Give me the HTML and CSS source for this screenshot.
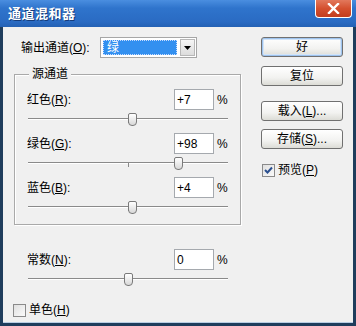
FILE: index.html
```html
<!DOCTYPE html>
<html lang="zh-CN">

    <head>
        <meta charset="UTF-8">
        <title>通道混和器</title>
        <link rel="stylesheet" href="styles.css">
    </head>

    <body>

        <div class="window">
            <div class="titlebar">
                <span class="title">通道混和器</span>
                <span class="close">
                    <svg width="13" height="11" viewBox="0 0 13 11">
                        <path d="M2 1 L11 10 M11 1 L2 10" stroke="#fff" stroke-width="2.4" stroke-linecap="square" />
                    </svg>
                </span>
            </div>

            <div class="client">
                <div class="main">
                    <div class="output-row">
                        <span class="output-label">输出通道(<u>O</u>):</span>
                        <div class="select">
                            <span class="select-value"><span class="focus">绿</span></span>
                            <span class="select-arrow">
                                <svg width="7" height="4" viewBox="0 0 7 4"><path d="M0 0 H7 L3.5 4 Z" fill="#000" /></svg>
                            </span>
                        </div>
                    </div>

                    <div class="group">
                        <span class="legend">源通道</span>

                        <div class="param">
                            <div class="param-head">
                                <span class="param-label">红色(<u>R</u>):</span>
                                <span class="field">+7</span>
                                <span class="unit">%</span>
                            </div>
                            <div class="slider">
                                <div class="track"></div>
                                <span class="tick"></span>
                                <span class="thumb" style="left: 101px"></span>
                            </div>
                        </div>

                        <div class="param">
                            <div class="param-head">
                                <span class="param-label">绿色(<u>G</u>):</span>
                                <span class="field">+98</span>
                                <span class="unit">%</span>
                            </div>
                            <div class="slider">
                                <div class="track"></div>
                                <span class="tick"></span>
                                <span class="thumb" style="left: 147px"></span>
                            </div>
                        </div>

                        <div class="param">
                            <div class="param-head">
                                <span class="param-label">蓝色(<u>B</u>):</span>
                                <span class="field">+4</span>
                                <span class="unit">%</span>
                            </div>
                            <div class="slider">
                                <div class="track"></div>
                                <span class="tick"></span>
                                <span class="thumb" style="left: 101px"></span>
                            </div>
                        </div>
                    </div>

                    <div class="param constant">
                        <div class="param-head">
                            <span class="param-label">常数(<u>N</u>):</span>
                            <span class="field">0</span>
                            <span class="unit">%</span>
                        </div>
                        <div class="slider">
                            <div class="track"></div>
                            <span class="tick"></span>
                            <span class="thumb" style="left: 97px"></span>
                        </div>
                    </div>

                    <label class="check mono">
                        <span class="box"></span>
                        <span>单色(<u>H</u>)</span>
                    </label>
                </div>

                <div class="side">
                    <button class="btn default">好</button>
                    <button class="btn reset">复位</button>
                    <button class="btn load">载入(<u>L</u>)...</button>
                    <button class="btn save">存储(<u>S</u>)...</button>
                    <label class="check preview">
                        <span class="box">
                            <svg width="9" height="9" viewBox="0 0 9 9"><path d="M1 4 L3.5 6.5 L8 1.5" fill="none" stroke="#2a4f8f" stroke-width="2" /></svg>
                        </span>
                        <span>预览(<u>P</u>)</span>
                    </label>
                </div>
            </div>
        </div>

    </body>

</html>
```

FILE: styles.css
```css
body {
    margin: 0;
    font-family: "Liberation Sans", "Noto Sans CJK SC", sans-serif;
    font-size: 12px;
    color: #000;
}

u {
    text-decoration: underline;
    text-underline-offset: 1px;
}

.window {
    width: 356px;
    height: 326px;
    box-sizing: border-box;
    display: flex;
    flex-direction: column;
    background: #1f3d5c;
    padding: 0 3px 3px 3px;
}

.titlebar {
    height: 27px;
    flex: none;
    display: flex;
    align-items: flex-start;
    justify-content: space-between;
    margin: 0 -3px;
    padding: 0 1px 0 8px;
    background: linear-gradient(180deg, #4a8ee0 0%, #2f74cc 30%, #2a6bc3 80%, #2461b4 100%);
}

.title {
    margin-top: 6px;
    color: #fff;
    font-weight: bold;
    font-size: 13px;
    line-height: 16px;
    text-shadow: 1px 1px 0 #153c7a;
    letter-spacing: 0.5px;
}

.close {
    width: 35px;
    height: 17px;
    display: flex;
    align-items: center;
    justify-content: center;
    margin-right: 3px;
    border: 1px solid #fff;
    border-top: none;
    border-radius: 0 0 4px 4px;
    background: linear-gradient(180deg, #e2785c 0%, #d4502f 50%, #c23d1e 100%);
}

.client {
    flex: 1;
    display: flex;
    background: #f0f0f0;
    border-bottom: 1px solid #b9cde3;
}

.main {
    width: 227px;
    padding: 10px 0 0 11px;
}

.output-row {
    height: 21px;
    display: flex;
    align-items: center;
}

.output-label {
    width: 79px;
    padding-left: 7px;
    line-height: 14px;
}

.select {
    width: 97px;
    height: 21px;
    box-sizing: border-box;
    display: flex;
    border: 1px solid #a6a6a6;
    background: #fff;
    padding: 1px;
}

.select-value {
    flex: 1;
    padding: 1px;
}

.focus {
    display: block;
    height: 100%;
    box-sizing: border-box;
    border: 1px dotted #c8dcff;
    background: #3390f0;
    color: #fff;
    padding-left: 3px;
    line-height: 14px;
}

.select-arrow {
    width: 13px;
    margin-left: 2px;
    display: flex;
    align-items: center;
    justify-content: center;
    border: 1px solid #b8b8b8;
    background: linear-gradient(180deg, #f6f6f6, #dcdcdc);
}

.group {
    position: relative;
    width: 227px;
    box-sizing: border-box;
    margin-top: 16px;
    padding: 14px 0 3px 12px;
    border: 1px solid #a9a9a9;
    box-shadow: inset 1px 1px 0 #fff, 1px 1px 0 #fff;
}

.legend {
    position: absolute;
    top: -8px;
    left: 14px;
    padding: 0 3px;
    background: #f0f0f0;
    line-height: 15px;
}

.param {
    height: 44px;
}

.constant {
    margin-top: 24px;
    padding-left: 13px;
}

.param-head {
    height: 21px;
    display: flex;
    align-items: center;
}

.param-label {
    width: 147px;
    line-height: 14px;
}

.field {
    width: 40px;
    height: 21px;
    box-sizing: border-box;
    border: 1px solid #a5a9ae;
    background: #fff;
    padding: 3px 0 0 2px;
    line-height: 14px;
}

.unit {
    margin-left: 3px;
    line-height: 14px;
}

.slider {
    position: relative;
    height: 23px;
}

.track {
    position: absolute;
    left: 1px;
    top: 8px;
    width: 200px;
    height: 2px;
    background: linear-gradient(180deg, #8a8a8a 50%, #ffffff 50%);
}

.tick {
    position: absolute;
    left: 101px;
    top: 8px;
    width: 1px;
    height: 5px;
    background: #8a8a8a;
}

.thumb {
    position: absolute;
    top: 3px;
    width: 9px;
    height: 13px;
    box-sizing: border-box;
    border: 1px solid #7a7a7a;
    border-radius: 2px 2px 4px 4px;
    background: linear-gradient(180deg, #ffffff, #d8d8d8);
}

.check {
    display: flex;
    align-items: center;
    gap: 3px;
    line-height: 14px;
}

.mono {
    margin: 10px 0 0 -1px;
}

.box {
    width: 13px;
    height: 13px;
    box-sizing: border-box;
    display: flex;
    align-items: center;
    justify-content: center;
    border: 1px solid #8a8a8a;
    background: linear-gradient(135deg, #e0e0e0, #fafafa);
}

.side {
    width: 82px;
    margin-left: 20px;
    padding-top: 10px;
    display: flex;
    flex-direction: column;
}

.btn {
    width: 82px;
    height: 20px;
    padding: 0;
    font-family: inherit;
    font-size: 12px;
    line-height: 14px;
    color: #000;
    border: 1px solid #707070;
    border-radius: 3px;
    background: linear-gradient(180deg, #ffffff 0%, #f2f2f0 60%, #dcdcd6 100%);
}

.default {
    box-shadow: inset 0 0 0 1px #9ec3ee, inset 0 0 0 2px #d2e4f8;
}

.reset {
    margin-top: 9px;
}

.load {
    margin-top: 15px;
}

.save {
    margin-top: 8px;
}

.preview {
    margin-top: 14px;
    margin-left: 1px;
}
```
